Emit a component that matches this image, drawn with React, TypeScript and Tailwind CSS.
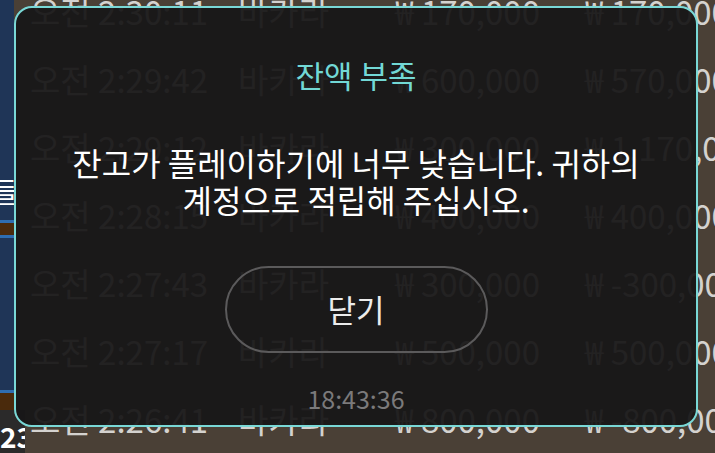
const rows = [
  { time: '오전 2:30:11', game: '바카라', bet: '₩ 170,000', win: '₩ 170,000' },
  { time: '오전 2:29:42', game: '바카라', bet: '₩ 600,000', win: '₩ 570,000' },
  { time: '오전 2:29:12', game: '바카라', bet: '₩ 300,000', win: '₩ 1,170,000' },
  { time: '오전 2:28:15', game: '바카라', bet: '₩ 400,000', win: '₩ 400,000' },
  { time: '오전 2:27:43', game: '바카라', bet: '₩ 300,000', win: '₩ -300,000' },
  { time: '오전 2:27:17', game: '바카라', bet: '₩ 500,000', win: '₩ 500,000' },
  { time: '오전 2:26:41', game: '바카라', bet: '₩ 800,000', win: '₩ -800,000' },
];

export default function App() {
  return (
    <div
      className="relative w-[715px] h-[453px] overflow-hidden bg-[#4a4036] flex"
      style={{ fontFamily: '"Noto Sans CJK KR", "Noto Sans", sans-serif' }}
    >
      {/* side panel */}
      <div className="w-[14px] shrink-0 flex flex-col relative z-10">
        <div className="h-[170px] bg-[#1f3557]" />
        <div className="h-[42px] bg-[#1f3557] overflow-hidden">
          <div className="text-white text-[28px] leading-[42px] whitespace-nowrap -ml-[8px]">들</div>
        </div>
        <div className="h-[8px] bg-[#1f3557]" />
        <div className="h-[3px] bg-[#2f6db0]" />
        <div className="h-[12px] bg-[#4a2a0c]" />
        <div className="h-[3px] bg-[#2f6db0]" />
        <div className="h-[152px] bg-[#1f3557]" />
        <div className="h-[3px] bg-[#2f6db0]" />
        <div className="h-[17px] bg-[#4a2a0c]" />
        <div className="flex-1 w-[25px] bg-[#2b2a2a] text-white text-[28px] font-bold leading-[40px] pt-[6px] whitespace-nowrap overflow-hidden">23</div>
      </div>

      {/* history table */}
      <div className="flex-1 flex flex-col -mt-[22px] text-[#d4d2cf] text-[33px]">
        {rows.map((r) => (
          <div key={r.time} className="h-[68px] shrink-0 flex items-center whitespace-nowrap">
            <div className="w-[224px] pl-[16px]">{r.time}</div>
            <div className="w-[110px]">{r.game}</div>
            <div className="w-[192px] text-right">{r.bet}</div>
            <div className="w-[250px] pl-[45px]">{r.win}</div>
          </div>
        ))}
      </div>

      {/* dialog */}
      <div className="absolute z-20 left-[14px] top-[6px] w-[684px] h-[421px] rounded-[18px] border-2 border-[#79d8d6] bg-[#171617]/[0.94] flex flex-col items-center">
        <div className="mt-[47px] text-[31px] leading-[40px] text-[#72d8d5]">잔액 부족</div>
        <div className="mt-[49px] text-[32px] leading-[37px] text-white text-center whitespace-nowrap">
          잔고가 플레이하기에 너무 낮습니다. 귀하의
          <br />
          계정으로 적립해 주십시오.
        </div>
        <button className="mt-[48px] w-[263px] h-[87px] rounded-full border-2 border-[#5b5a5b] text-[31px] text-[#ececec] flex items-center justify-center">
          닫기
        </button>
        <div className="mt-[30px] text-[25px] leading-[30px] text-[#7b7a7b]">18:43:36</div>
      </div>
    </div>
  );
}
